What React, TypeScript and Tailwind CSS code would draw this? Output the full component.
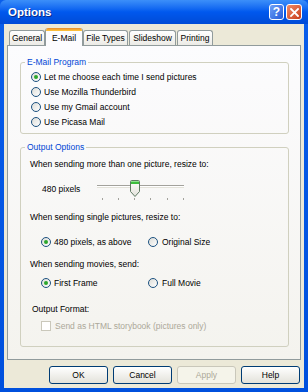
import React from 'react'

function Radio({ checked }: { checked?: boolean }) {
  return (
    <span className="w-[10px] h-[10px] shrink-0 rounded-full border border-[#1C5180] bg-gradient-to-br from-[#DCDCD7] to-white flex items-center justify-center">
      {checked && <span className="w-[4px] h-[4px] rounded-full bg-[#2CA72C]" />}
    </span>
  )
}

function Slider() {
  const ticks = [0, 1, 2, 3, 4, 5]
  return (
    <svg width="92" height="21" viewBox="0 0 92 21" className="shrink-0">
      <line x1="0" y1="5.5" x2="87" y2="5.5" stroke="#A3A29C" />
      <line x1="0" y1="6.5" x2="87" y2="6.5" stroke="#FFFFFF" />
      <line x1="0" y1="7.5" x2="87" y2="7.5" stroke="#E4E3DA" />
      {ticks.map((i) => (
        <rect key={i} x={Math.round(4.7 + 16.2 * i)} y="18" width="1" height="2" fill="#A3A29C" />
      ))}
      <defs>
        <linearGradient id="thumb" x1="0" y1="0" x2="0" y2="1">
          <stop offset="0" stopColor="#FFFFFF" />
          <stop offset="1" stopColor="#E3E2DA" />
        </linearGradient>
      </defs>
      <path d="M33.5,1.5 Q33.5,0.5 34.5,0.5 L41.5,0.5 Q42.5,0.5 42.5,1.5 L42.5,11.5 L38,16.5 L33.5,11.5 Z" fill="url(#thumb)" stroke="#5F7A63" />
      <rect x="34" y="1" width="8" height="3" fill="#3DBE3D" />
      <rect x="34" y="1" width="8" height="1" fill="#8FE48F" />
    </svg>
  )
}

function Tab({ label, w, ml = 0 }: { label: string; w: number; ml?: number }) {
  return (
    <div
      style={{ width: w, marginLeft: ml }}
      className="h-[15px] border-t border-x border-[#919B9C] rounded-t-[3px] bg-gradient-to-b from-white to-[#ECEBE6] flex items-center justify-center text-black"
    >
      {label}
    </div>
  )
}

export default function App() {
  return (
    <div className="w-[308px] h-[392px] flex flex-col bg-gradient-to-b from-[#0A5EEB] to-[#0050DD] font-['Liberation_Sans',Arial,sans-serif] text-[8.5px] leading-[12px] text-black overflow-hidden">
      {/* title bar */}
      <div className="h-[24px] shrink-0 flex items-center pl-[8px] pr-[6px] bg-gradient-to-b from-[#3C8FF9] via-[#0058EE] to-[#004BD6] rounded-t-[6px]">
        <span className="text-white font-bold text-[11.5px] [text-shadow:1px_1px_0_#0A2A88] flex-1">Options</span>
        <div className="flex gap-[2px]">
          <div className="w-[15px] h-[16px] rounded-[3px] border border-white bg-gradient-to-br from-[#6FA0F8] to-[#2459D8] flex items-center justify-center text-white font-bold text-[12px]">?</div>
          <div className="w-[16px] h-[16px] rounded-[3px] border border-white bg-gradient-to-br from-[#F08A65] to-[#C73A16] flex items-center justify-center">
            <svg width="9" height="9" viewBox="0 0 9 9">
              <path d="M1,1 L8,8 M8,1 L1,8" stroke="white" strokeWidth="1.8" strokeLinecap="square" />
            </svg>
          </div>
        </div>
      </div>

      {/* body */}
      <div className="flex-1 mx-[4px] mb-[4px] bg-[#ECE9D8] flex flex-col px-[3px]">
        {/* tabs */}
        <div className="h-[21px] flex items-end pl-[2px] relative z-10">
          <Tab label="General" w={36} />
          <div className="w-[38px] h-[18px] -mb-[1px] border-x border-[#919B9C] rounded-t-[3px] overflow-hidden bg-[#FCFCFE] flex flex-col">
            <div className="h-[3px] bg-gradient-to-b from-[#E68B2C] to-[#FFC73C]" />
            <div className="flex-1 flex items-center justify-center pb-[2px]">E-Mail</div>
          </div>
          <Tab label="File Types" w={45} />
          <Tab label="Slideshow" w={47} ml={1} />
          <Tab label="Printing" w={36} ml={1} />
        </div>

        {/* panel */}
        <div className="h-[315px] border border-[#919B9C] bg-gradient-to-b from-[#FCFCFE] to-[#F4F3EE] pt-[10px] pl-[12px] pr-[11px]">
          <fieldset className="border border-[#D0D0BF] rounded-[3px] pb-[4px]">
            <legend className="ml-[4px] px-[2px] text-[#0046D5]">E-Mail Program</legend>
            <div className="flex flex-col mt-[1px] ml-[10px]">
              {[
                ['Let me choose each time I send pictures', true],
                ['Use Mozilla Thunderbird', false],
                ['Use my Gmail account', false],
                ['Use Picasa Mail', false],
              ].map(([t, c]) => (
                <div key={t as string} className="h-[15px] flex items-center gap-[3px]">
                  <Radio checked={c as boolean} />
                  <span>{t as string}</span>
                </div>
              ))}
            </div>
          </fieldset>

          <fieldset className="mt-[7px] border border-[#D0D0BF] rounded-[3px] pb-[14px]">
            <legend className="ml-[4px] px-[2px] text-[#0046D5]">Output Options</legend>
            <div className="mt-[5px] ml-[9px]">When sending more than one picture, resize to:</div>
            <div className="mt-[10px] flex">
              <span className="ml-[21px] w-[55px] mt-[3px]">480 pixels</span>
              <Slider />
            </div>
            <div className="mt-[10px] ml-[9px]">When sending single pictures, resize to:</div>
            <div className="mt-[12px] h-[14px] flex items-center ml-[20px]">
              <div className="w-[107px] flex items-center gap-[3px]">
                <Radio checked />
                <span>480 pixels, as above</span>
              </div>
              <div className="flex items-center gap-[4px]">
                <Radio />
                <span>Original Size</span>
              </div>
            </div>
            <div className="mt-[9px] ml-[9px]">When sending movies, send:</div>
            <div className="mt-[6px] h-[14px] flex items-center ml-[20px]">
              <div className="w-[107px] flex items-center gap-[3px]">
                <Radio checked />
                <span>First Frame</span>
              </div>
              <div className="flex items-center gap-[4px]">
                <Radio />
                <span>Full Movie</span>
              </div>
            </div>
            <div className="mt-[13px] ml-[11px]">Output Format:</div>
            <div className="mt-[5px] h-[12px] flex items-center gap-[4px] ml-[20px] text-[#ACA899]">
              <span className="w-[10px] h-[10px] shrink-0 border border-[#CAC8BB] bg-white" />
              <span>Send as HTML storybook (pictures only)</span>
            </div>
          </fieldset>
        </div>

        {/* buttons */}
        <div className="mt-[6px] h-[18px] flex justify-end gap-[5px] pr-[1px]">
          {['OK', 'Cancel', 'Apply', 'Help'].map((b) => (
            <div
              key={b}
              className={
                b === 'Apply'
                  ? 'w-[59px] h-[18px] rounded-[3px] border border-[#C9C7BA] bg-[#F5F4EA] text-[#ACA899] flex items-center justify-center'
                  : 'w-[59px] h-[18px] rounded-[3px] border border-[#003C74] bg-gradient-to-b from-white to-[#E3E2DA] flex items-center justify-center'
              }
            >
              {b}
            </div>
          ))}
        </div>
      </div>
    </div>
  )
}
